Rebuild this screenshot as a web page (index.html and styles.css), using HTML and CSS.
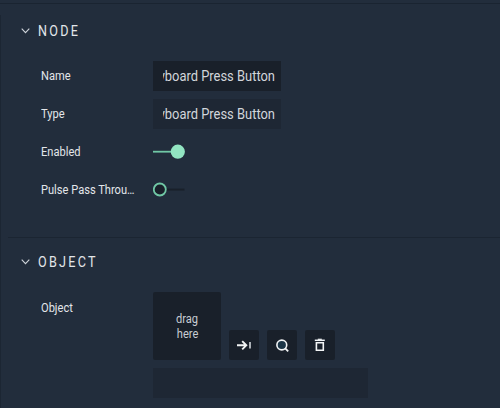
FILE: index.html
```html
<!DOCTYPE html>
<html lang="en">
<head>
<meta charset="utf-8">
<title>Properties</title>
<link rel="stylesheet" href="styles.css">
</head>
<body>
<div class="topbar"></div>
<main class="panel">
  <section class="section node">
    <h2 class="heading"><svg class="chevron" width="9" height="6" viewBox="0 0 9 6"><path d="M.7.7 4.5 4.7 8.3.7"/></svg><span>NODE</span></h2>
    <div class="row"><span class="label">Name</span><div class="field"><div class="clip"><span>Keyboard Press Button</span></div></div></div>
    <div class="row"><span class="label">Type</span><div class="field readonly"><div class="clip"><span>Keyboard Press Button</span></div></div></div>
    <div class="row"><span class="label">Enabled</span><svg class="toggle" width="32" height="16" viewBox="0 0 32 16"><path d="M0 7.7H20" stroke="#70c7a5" stroke-width="1.8"/><circle cx="24.8" cy="7.7" r="7.1" fill="#92e5c2"/></svg></div>
    <div class="row"><span class="label">Pulse Pass Throu…</span><svg class="toggle" width="32" height="16" viewBox="0 0 32 16"><path d="M12 7.6H31.5" stroke="#19202a" stroke-width="2"/><circle cx="6.8" cy="7.5" r="6" fill="#19202a" stroke="#70c7a5" stroke-width="1.8"/></svg></div>
  </section>
  <section class="section object">
    <h2 class="heading"><svg class="chevron" width="9" height="6" viewBox="0 0 9 6"><path d="M.7.7 4.5 4.7 8.3.7"/></svg><span>OBJECT</span></h2>
    <div class="row tall">
      <span class="label">Object</span>
      <div class="picker">
        <div class="tools">
          <div class="drop"><span>drag</span><span class="second">here</span></div>
          <div class="button"><svg width="30" height="30" viewBox="0 0 30 30"><path d="M8 15.3h8.8M13.2 11.2l4.1 4.1-4.1 4.1" stroke-width="1.9"/><path d="M21 12v6.6" stroke="#c8ccd1" stroke-width="1.7"/></svg></div>
          <div class="button"><svg width="30" height="30" viewBox="0 0 30 30"><circle cx="14.8" cy="15" r="4.9" fill="#1b3547" stroke-width="1.6"/><path d="m18 18.2 3.2 3.2" stroke-width="1.8"/></svg></div>
          <div class="button"><svg width="30" height="30" viewBox="0 0 30 30"><path d="M9.8 10.3h10" stroke-width="1.5"/><path d="M12.8 9.3h4" stroke-width="1.2"/><path d="M11.4 12.7h6.9v7.6h-6.9z" stroke-width="1.6"/></svg></div>
        </div>
        <div class="value"></div>
      </div>
    </div>
  </section>
</main>
</body>
</html>
```
FILE: styles.css
```css
* { box-sizing: border-box; }
body {
  margin: 0;
  height: 408px;
  overflow: hidden;
  background: #222d3c;
  color: #e3e6ea;
  font: 12px/16px Roboto, "Liberation Sans", sans-serif;
}
.topbar { height: 15px; border-top: 3px solid #222d3c; }
.topbar::before { content: ""; display: block; height: 1px; background: #1a2431; }
.panel { height: 393px; border-left: 1px solid #1c2633; padding-left: 7px; }
.section { padding-left: 13px; }
.node { height: 222px; padding-top: 6px; }
.object { border-top: 1px solid #1b2532; padding-top: 14px; }
.heading {
  display: flex;
  align-items: center;
  height: 20px;
  margin: 0 0 16px;
  font-size: 14px;
  font-weight: 400;
  letter-spacing: 2.5px;
}
.heading span { transform: scaleX(.9); transform-origin: left; }
.chevron { margin-right: 8px; fill: none; stroke: #cfd4da; stroke-width: 1.1; }
.row { display: flex; align-items: center; height: 38px; padding-left: 20px; }
.label { width: 112px; flex: none; white-space: nowrap; transform: scaleX(.925); transform-origin: left; }
.field { width: 127.5px; height: 30px; padding: 0 6px 0 9.5px; background: #19202a; display: flex; align-items: center; }
.readonly { background: #1e2734; }
.clip {
  flex: 1;
  min-width: 0;
  display: flex;
  justify-content: flex-end;
  overflow: hidden;
  white-space: nowrap;
  font-size: 14px;
  line-height: 20px;
  color: #d2d6db;
}
.clip span { flex: none; transform: scaleX(.923); transform-origin: right; }
.toggle { display: block; fill: none; }
.tall { align-items: flex-start; height: 110px; padding-top: 4px; }
.tall .label { margin-top: 8px; }
.tools { display: flex; align-items: flex-end; gap: 8px; }
.drop {
  width: 68px;
  height: 68px;
  background: #19202a;
  border-radius: 2px;
  display: flex;
  flex-direction: column;
  align-items: center;
  justify-content: center;
  padding-top: 2px;
  line-height: 15px;
  color: #c8cdd4;
}
.drop span { transform: scaleX(.925); }
.second { padding-left: 2px; }
.button { width: 30px; height: 30px; background: #19202a; border-radius: 2px; }
.button svg { display: block; fill: none; stroke: #f2f4f5; }
.value { width: 215px; height: 30px; margin-top: 8px; background: #1e2734; }
```
